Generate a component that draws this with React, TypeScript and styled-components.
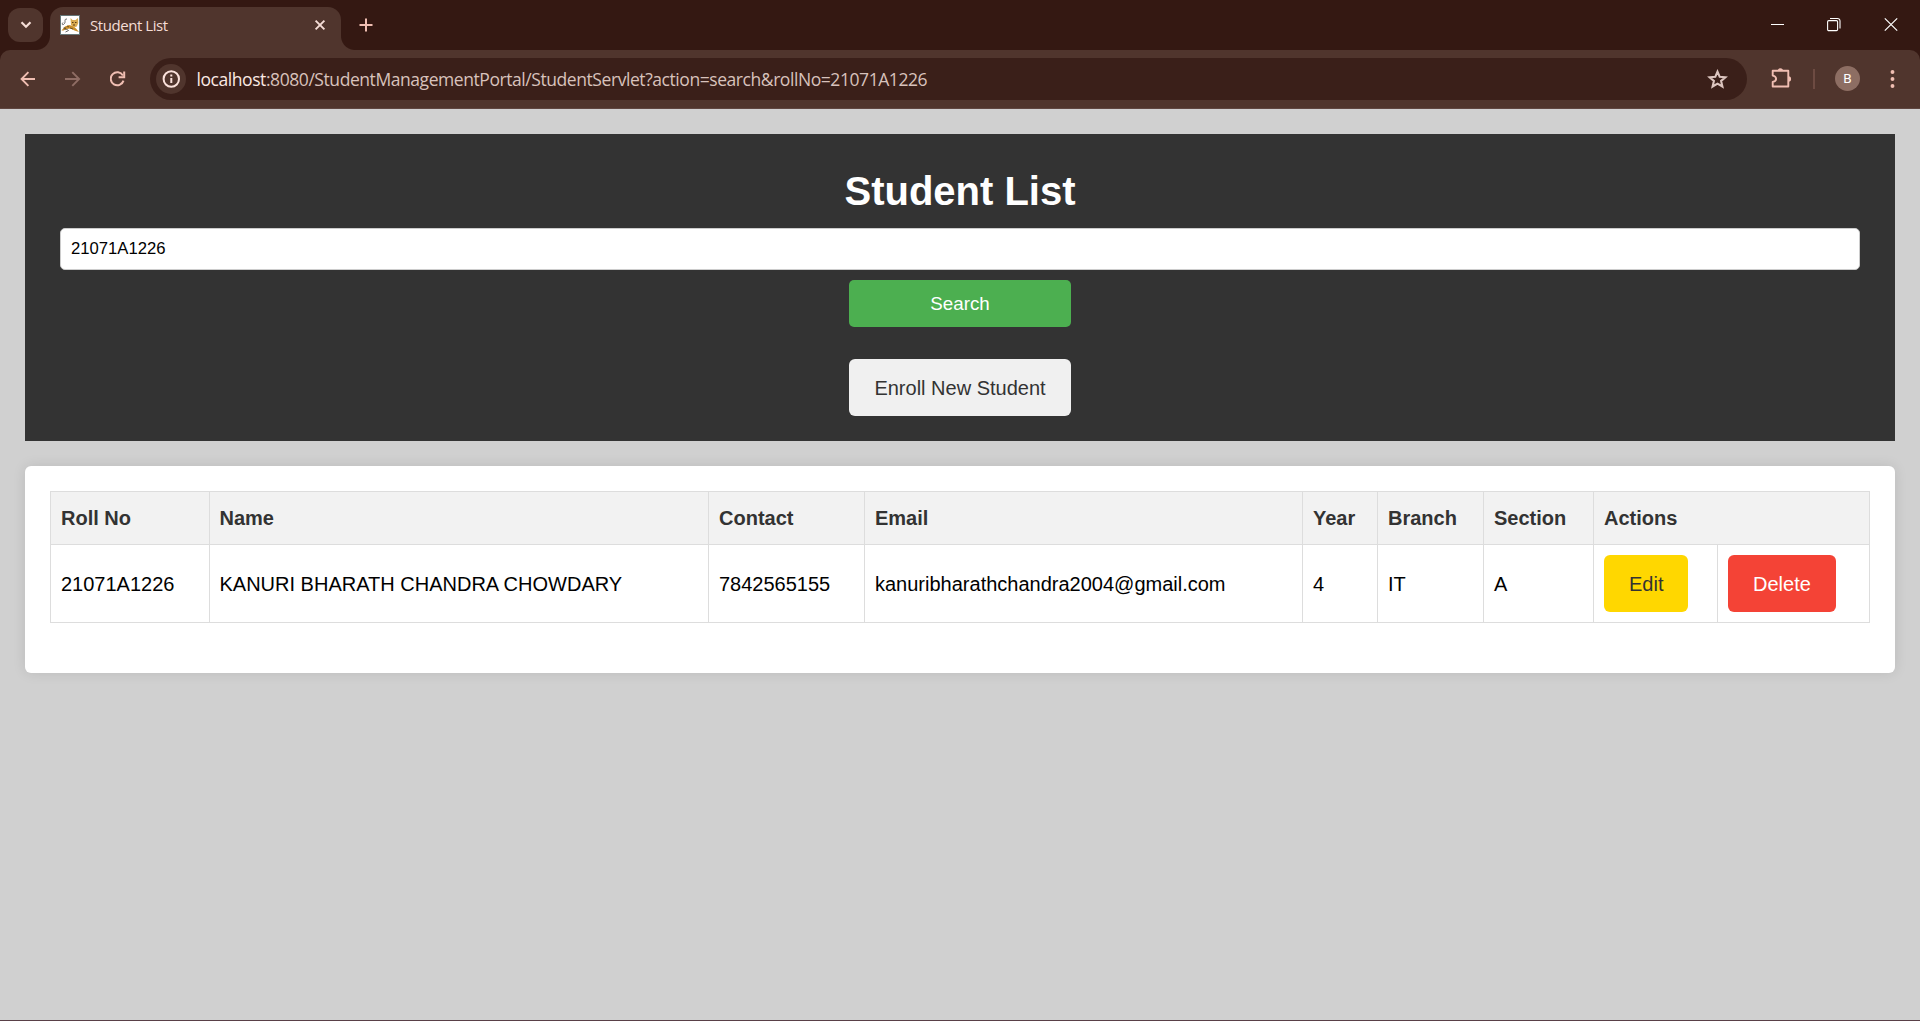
import React from "react";
import styled, { createGlobalStyle } from "styled-components";

const frame = "#341812";
const bar = "#50352d";
const field = "#3a1f19";
const pink = "#f0beb2";
const uiFont = `"Open Sans", "Noto Sans", sans-serif`;
const pageFont = `"Liberation Sans", Arial, sans-serif`;

const GlobalStyle = createGlobalStyle`
  *, *::before, *::after { box-sizing: border-box; }
  body { margin: 0; background: #d0d0d0; overflow: hidden; }
  svg { display: block; flex: none; }
`;

const Window = styled.div`
  display: flex;
  flex-direction: column;
  height: 1021px;
  background: #d0d0d0;
  border-bottom: 1px solid #594048;
`;

const TabStrip = styled.div`
  display: flex;
  align-items: flex-start;
  height: 50px;
  flex: none;
  padding-left: 8px;
  background: ${frame};
`;

const TabSearch = styled.button`
  display: grid;
  place-items: center;
  width: 35px;
  height: 34px;
  margin: 8px 7px 0 0;
  padding: 0;
  border: 0;
  border-radius: 12px;
  background: ${bar};
`;

const Tab = styled.div`
  position: relative;
  display: flex;
  align-items: center;
  width: 291px;
  height: 43px;
  margin-top: 7px;
  padding: 0 15px 8px 10px;
  border-radius: 13px 13px 0 0;
  background: ${bar};
  &::before, &::after {
    content: "";
    position: absolute;
    bottom: 0;
    width: 14px;
    height: 14px;
  }
  &::before {
    left: -14px;
    background: radial-gradient(circle at 0 0, transparent 13.5px, ${bar} 14.5px);
  }
  &::after {
    right: -14px;
    background: radial-gradient(circle at 100% 0, transparent 13.5px, ${bar} 14.5px);
  }
`;

const TabTitle = styled.span`
  flex: 1;
  margin: 1px 0 0 10px;
  font: 400 15px/20px ${uiFont};
  letter-spacing: -0.44px;
  color: #f5ddd6;
`;

const NewTab = styled.div`
  margin: 17px 0 0 18px;
`;

const WindowControls = styled.div`
  display: flex;
  align-items: center;
  gap: 43px;
  margin: 17px 22px 0 auto;
`;

const ToolbarBack = styled.div`
  flex: none;
  background: ${frame};
`;

const Toolbar = styled.div`
  display: flex;
  align-items: center;
  height: 59px;
  padding: 0 19px 1px;
  border-radius: 10px 10px 0 0;
  border-bottom: 1px solid #5f4640;
  background: ${bar};
`;

const NavIcons = styled.div`
  display: flex;
  align-items: center;
  gap: 29px;
  width: 131px;
  padding-left: 1px;
`;

const AddressBar = styled.div`
  display: flex;
  align-items: center;
  width: 1597px;
  height: 42px;
  padding: 0 19px 0 6px;
  border-radius: 21px;
  background: ${field};
`;

const InfoBadge = styled.span`
  display: grid;
  place-items: center;
  width: 30px;
  height: 30px;
  border-radius: 50%;
  background: ${bar};
`;

const Url = styled.span`
  flex: 1;
  margin-left: 10.5px;
  font: 400 17.5px/24px ${uiFont};
  letter-spacing: -0.432px;
  color: #d8c2bc;
  white-space: nowrap;
`;

const Host = styled.span`
  color: #fbe9e4;
`;

const ToolbarEnd = styled.div`
  display: flex;
  align-items: center;
  margin-left: 24px;
`;

const Divider = styled.span`
  width: 2px;
  height: 20px;
  margin: 0 20px 0 21px;
  background: #6d4b42;
`;

const Avatar = styled.span`
  display: grid;
  place-items: center;
  width: 25px;
  height: 25px;
  margin-right: 30px;
  border-radius: 50%;
  background: #8d6e63;
  color: #fff;
  font: 400 13.5px/25px Roboto, sans-serif;
`;

const Page = styled.main`
  display: flex;
  flex-direction: column;
  gap: 25px;
  padding: 25px;
  font-family: ${pageFont};
`;

const Header = styled.header`
  display: flex;
  flex-direction: column;
  align-items: center;
  height: 307px;
  padding: 34px 35px 25px;
  background: #333;
`;

const Title = styled.h1`
  margin: 0 0 14px;
  font-size: 40px;
  line-height: 46px;
  font-weight: 700;
  color: #fff;
`;

const SearchInput = styled.input`
  width: 100%;
  height: 42px;
  padding: 0 10px;
  border: 1px solid #ccc;
  border-radius: 5px;
  background: #fff;
  color: #000;
  font: 400 16.67px/20px ${pageFont};
`;

const SearchButton = styled.button`
  width: 222px;
  height: 47px;
  margin-top: 10px;
  padding: 0;
  border: 0;
  border-radius: 5px;
  background: #4caf50;
  color: #fff;
  font: 400 18.75px/23px ${pageFont};
`;

const LinkButton = styled.a<{ $bg: string; $color: string; $top?: number }>`
  display: inline-block;
  margin-top: ${(p) => p.$top ?? 0}px;
  padding: 18px 25px 16px;
  border-radius: 6px;
  background: ${(p) => p.$bg};
  color: ${(p) => p.$color};
  font-size: 20px;
  line-height: 23px;
  white-space: nowrap;
  vertical-align: top;
`;

const Card = styled.section`
  height: 207px;
  padding: 25px;
  border-radius: 6px;
  background: #fff;
  box-shadow: 0 0 12.5px rgba(0, 0, 0, 0.1);
`;

const Table = styled.table`
  width: 1820px;
  table-layout: fixed;
  border-collapse: collapse;
  font-size: 20px;
  line-height: 23px;
  color: #000;
`;

const HeadCell = styled.th`
  height: 53px;
  padding: 0 10px;
  border: 1px solid #ddd;
  background: #f2f2f2;
  color: #333;
  text-align: left;
  &:nth-child(2) { padding-left: 9.5px; }
`;

const Cell = styled.td`
  height: 78px;
  padding: 1px 10px 0;
  border: 1px solid #ddd;
  white-space: nowrap;
  &:nth-child(2) { padding-left: 9.5px; }
`;

const ActionCell = styled(Cell)`
  padding-top: 0;
`;

const columnWidths = [159, 499, 156, 438, 75, 106, 110, 124, 152];
const headings = ["Roll No", "Name", "Contact", "Email", "Year", "Branch", "Section"];
const student = [
  "21071A1226",
  "KANURI BHARATH CHANDRA CHOWDARY",
  "7842565155",
  "kanuribharathchandra2004@gmail.com",
  "4",
  "IT",
  "A",
];

const Favicon = () => (
  <svg width="20" height="20" viewBox="0 0 20 20">
    <rect width="20" height="20" fill="#fff" />
    <rect x=".5" y=".5" width="19" height="19" fill="none" stroke="#33484a" strokeOpacity=".75" />
    <path d="M1.500 15.500 5 11.500l4-1.500 4 1 3 2.500 3 3.500-4.500-1.500-4-2-4 .5-3 1.500z" fill="#c98f2c" />
    <path d="M10.500 3 12.500 5h3L18 3l.3 5-1.500 3.500-3 1-2.800-2.500z" fill="#d9ab50" />
    <path d="M7 4C3.500 4 6 6.500 4.500 8.500 2.500 11 1.500 9 3 7.500M3.500 13c2 2 4 1 5 2.500L5.500 17" fill="none" stroke="#444" strokeWidth=".8" />
    <path d="M12 7.500h1.500M15 7.500h1.500M13 10h2" stroke="#5a3c15" strokeWidth="1" />
    <path d="m7 11 2 1M10 13l3 1M4.500 12.500l1.500 1" stroke="#5d471f" strokeWidth=".9" />
  </svg>
);

export default function App() {
  return (
    <>
      <GlobalStyle />
      <Window>
        <TabStrip>
          <TabSearch aria-label="Search tabs">
            <svg width="12" height="8" viewBox="0 0 12 8" fill="none" stroke="#f5ddd6" strokeWidth="2.200">
              <path d="m1.500 1.300 4.500 4.500 4.500-4.500" />
            </svg>
          </TabSearch>
          <Tab>
            <Favicon />
            <TabTitle>Student List</TabTitle>
            <svg width="12" height="12" viewBox="0 0 12 12" stroke="#f5ddd6" strokeWidth="1.900">
              <path d="m1.600 1.600 8.800 8.800M10.400 1.600 1.600 10.400" />
            </svg>
          </Tab>
          <NewTab>
            <svg width="14" height="16" viewBox="0 0 14 16" stroke={pink} strokeWidth="2">
              <path d="M0.500 8h13M7 1.500v13" />
            </svg>
          </NewTab>
          <WindowControls>
            <svg width="13" height="15" viewBox="0 0 13 15" stroke="#fff" strokeWidth="1">
              <path d="M0 7.500h13" />
            </svg>
            <svg width="14" height="15" viewBox="0 0 14 15" fill="none" stroke="#fff" strokeWidth="1.100">
              <rect x=".6" y="3.600" width="10" height="10" rx="1.200" />
              <path d="M3 1.500h7.500a2.500 2.500 0 0 1 2.500 2.500v7.500" />
            </svg>
            <svg width="14" height="15" viewBox="0 0 14 15" stroke="#fff" strokeWidth="1.200">
              <path d="m.8 1.300 12.400 12.400M13.200 1.300.8 13.700" />
            </svg>
          </WindowControls>
        </TabStrip>

        <ToolbarBack>
          <Toolbar>
            <NavIcons>
              <svg width="16" height="16" viewBox="0 0 16 16" fill="none" stroke={pink} strokeWidth="1.900">
                <path d="M15 8H1.800M8.400 1.200 1.600 8l6.800 6.800" />
              </svg>
              <svg width="16" height="16" viewBox="0 0 16 16" fill="none" stroke="#8f6d64" strokeWidth="1.900">
                <path d="M0 8h13.500M7.300 1.200 14.100 8l-6.800 6.800" />
              </svg>
              <svg width="16" height="16" viewBox="0 0 16 16" fill="none" stroke={pink} strokeWidth="2">
                <path d="M12.900 4.500A6.500 6.500 0 1 0 13.500 9.600" />
                <path d="M14.200.5v5.700H8.600" />
              </svg>
            </NavIcons>
            <AddressBar>
              <InfoBadge>
                <svg width="18" height="18" viewBox="0 0 18 18" fill="none" stroke="#fbe2dc" strokeWidth="2">
                  <circle cx="9.300" cy="9" r="7.700" />
                  <path d="M9.300 8v5M9.300 4.600v2" />
                </svg>
              </InfoBadge>
              <Url>
                <Host>localhost</Host>:8080/StudentManagementPortal/StudentServlet?action=search&amp;rollNo=21071A1226
              </Url>
              <svg width="21" height="20" viewBox="0 0 21 20" fill="none" stroke="#dcc5bf" strokeWidth="2.100">
                <path d="m10.500 2.600 2.200 5.200 5.700.5-4.300 3.700 1.300 5.500-4.900-2.900-4.900 2.900 1.300-5.500-4.300-3.700 5.700-.5z" />
              </svg>
            </AddressBar>
            <ToolbarEnd>
              <svg width="21" height="21" viewBox="0 0 21 21" fill="none" stroke={pink} strokeWidth="1.900" strokeLinejoin="round">
                <path d="M1.700 2.800h15.600v15.700H1.700v-4.500c2.700-.6 3.400-2 3.400-3.200s-.7-2.600-3.400-3.200z" />
                <path d="M6.800 2.800a2.600 2.600 0 0 1 5.200 0zM17.500 8.300a2.600 2.600 0 0 1 0 5.200z" fill={pink} stroke="none" />
              </svg>
              <Divider />
              <Avatar>B</Avatar>
              <svg width="5" height="18" viewBox="0 0 5 18" fill={pink}>
                <circle cx="2.500" cy="2" r="1.950" />
                <circle cx="2.500" cy="9" r="1.950" />
                <circle cx="2.500" cy="16" r="1.950" />
              </svg>
            </ToolbarEnd>
          </Toolbar>
        </ToolbarBack>

        <Page>
          <Header>
            <Title>Student List</Title>
            <SearchInput defaultValue="21071A1226" />
            <SearchButton>Search</SearchButton>
            <LinkButton $bg="#f0f0f0" $color="#333" $top={32}>Enroll New Student</LinkButton>
          </Header>
          <Card>
            <Table>
              <colgroup>
                {columnWidths.map((w, i) => (
                  <col key={i} width={w} />
                ))}
              </colgroup>
              <thead>
                <tr>
                  {headings.map((h) => (
                    <HeadCell key={h}>{h}</HeadCell>
                  ))}
                  <HeadCell colSpan={2}>Actions</HeadCell>
                </tr>
              </thead>
              <tbody>
                <tr>
                  {student.map((value) => (
                    <Cell key={value}>{value}</Cell>
                  ))}
                  <ActionCell>
                    <LinkButton $bg="#ffd700" $color="#333">Edit</LinkButton>
                  </ActionCell>
                  <ActionCell>
                    <LinkButton $bg="#f44336" $color="#fff">Delete</LinkButton>
                  </ActionCell>
                </tr>
              </tbody>
            </Table>
          </Card>
        </Page>
      </Window>
    </>
  );
}
